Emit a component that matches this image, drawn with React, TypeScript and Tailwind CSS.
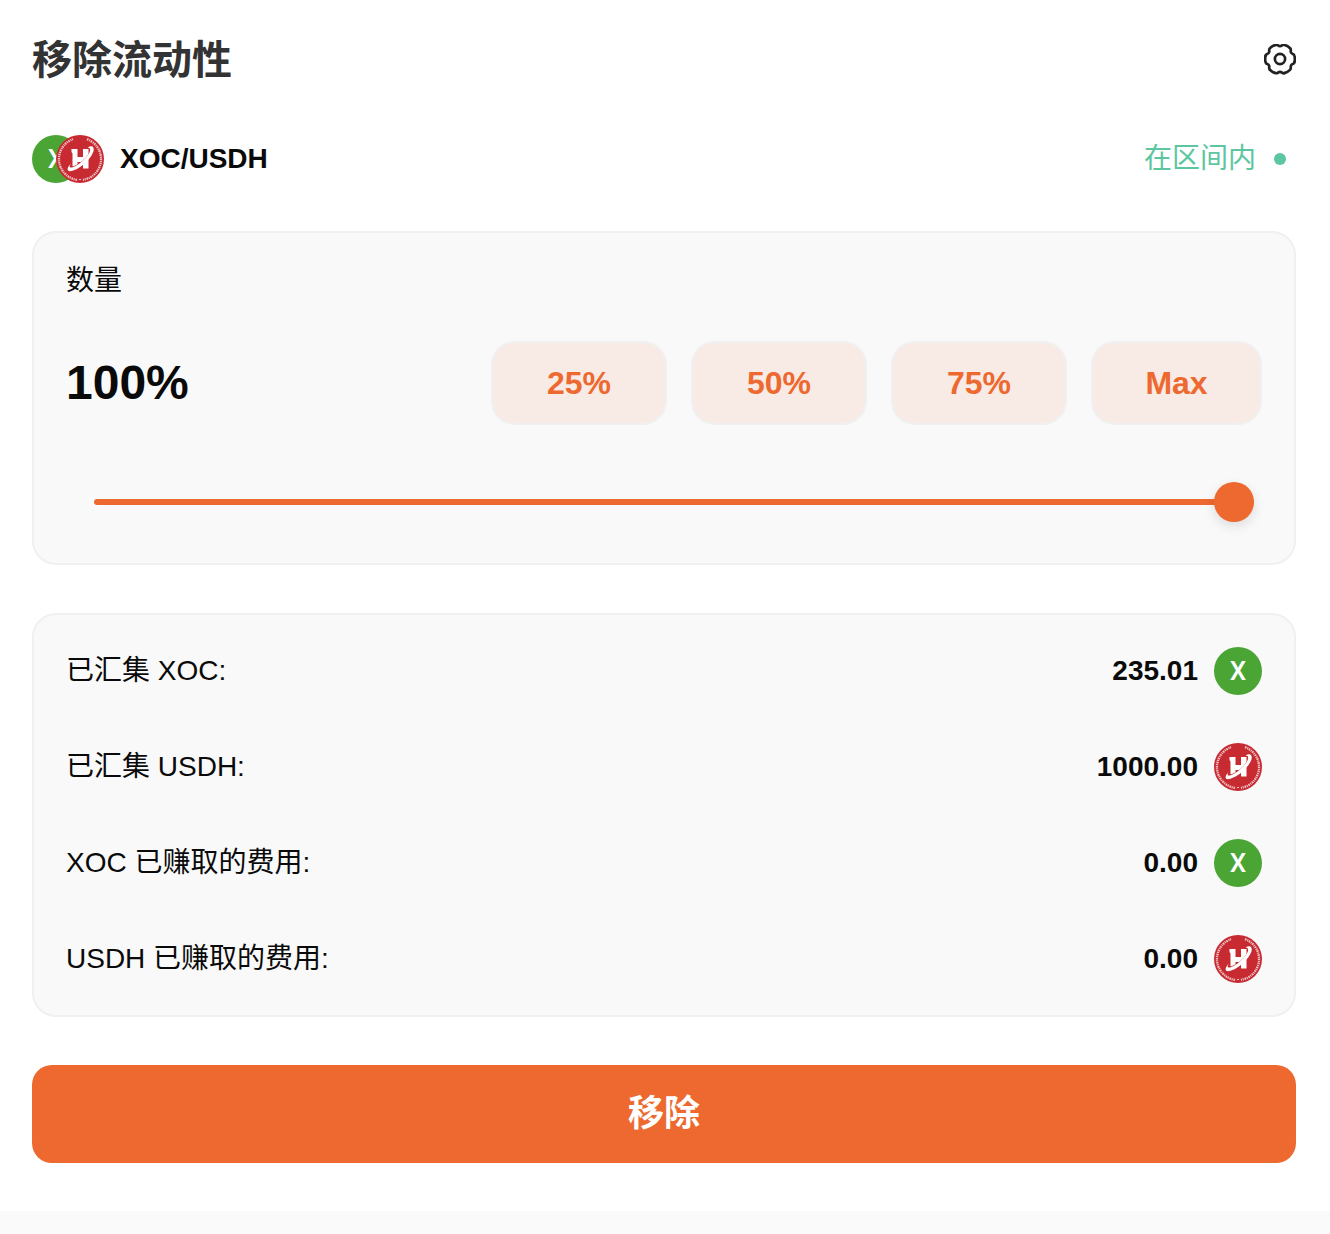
import { useState } from 'react';

const PRESETS = [
  { label: '25%', value: 25 },
  { label: '50%', value: 50 },
  { label: '75%', value: 75 },
];

const ROWS = [
  { label: '已汇集 XOC:', amount: '235.01', token: 'XOC' },
  { label: '已汇集 USDH:', amount: '1000.00', token: 'USDH' },
  { label: 'XOC 已赚取的费用:', amount: '0.00', token: 'XOC' },
  { label: 'USDH 已赚取的费用:', amount: '0.00', token: 'USDH' },
];

function SettingsIcon() {
  return (
    <svg viewBox="-16 -15 32 32" className="h-8 w-8" fill="none" stroke="currentColor" strokeWidth="2.7" strokeLinecap="round">
      {/* One notch and one tooth per sixth of the gear */}
      {[0, 60, 120, 180, 240, 300].map((deg) => (
        <path
          key={deg}
          transform={`rotate(${deg})`}
          d="M-4.39 -14.1C-2.09 -14.9 -2.2 -12.8 0 -12.8S2.09 -14.9 4.39 -14.1A12 12 0 0 1 10.02 -10.85"
        />
      ))}
      <circle r="5.1" />
    </svg>
  );
}

function UsdhIcon() {
  return (
    <svg viewBox="0 0 48 48" className="h-12 w-12 shrink-0">
      <circle cx="24" cy="24" r="24" fill="#c72a31" />
      {/* Lettering ring, broken at the top and around the bottom dash */}
      <path
        d="M31 4.2A21 21 0 0 1 27 44.8M21 44.8A21 21 0 0 1 17 4.2"
        fill="none"
        stroke="#f0c4c6"
        strokeWidth="2.3"
        strokeDasharray="1.6 .8 1.1 .7"
      />
      <path d="M23 44.5h2" stroke="#f0c4c6" strokeWidth="1" />
      <path d="M15.5 14H21.5V22H27V14H32.5V33.5H27V27H21.5V33.5H16.5V18.5L15.5 17Z" fill="#fff" />
      {/* Swoosh crossing the H */}
      <path d="M14 32.5C19.5 32 26 28 30.5 23C33 20 35 16.5 34.5 13.5" fill="none" stroke="#c72a31" strokeWidth="1.6" />
      <path
        d="M15 28.5C10 33.5 10.5 37.5 16.5 35.7C27 32.7 40 18.5 37.4 12.7C36.5 10.8 34 11 31.5 12.5C35.8 12.3 34.8 17.5 29.5 23C24 29 17 33.3 14.5 32.5C13 32 13.5 30.5 15 28.5Z"
        fill="#fff"
      />
    </svg>
  );
}

function XocIcon() {
  return (
    <span className="flex h-12 w-12 shrink-0 items-center justify-center rounded-full bg-[#4aa535] font-['Roboto',sans-serif] text-[26px] font-medium text-white">
      X
    </span>
  );
}

export default function App() {
  const [percent, setPercent] = useState(100);

  return (
    <div className="min-h-screen bg-[#fafafa] font-['Liberation_Sans','Noto_Sans_CJK_SC',sans-serif] text-[28px] leading-8 text-[#0a0a0a]">
      <main className="bg-white pt-8 pr-[34px] pb-12 pl-8">
        <header className="flex h-14 items-center justify-between">
          <h1 className="text-[40px] leading-[56px] font-bold text-[#333]">移除流动性</h1>
          <button type="button" aria-label="设置" className="text-[#222]">
            <SettingsIcon />
          </button>
        </header>

        <div className="mt-[47px] flex items-center justify-between">
          <div className="flex items-center">
            <XocIcon />
            <div className="-ml-6">
              <UsdhIcon />
            </div>
            <span className="ml-4 font-bold">XOC/USDH</span>
          </div>
          <div className="flex items-center gap-[18px] pr-2.5 text-[#5cc6a1]">
            <span>在区间内</span>
            <span className="h-3 w-3 rounded-full bg-[#5cc6a1]" />
          </div>
        </div>

        <section className="mt-12 rounded-3xl border-2 border-[#f0f0f0] bg-[#f9f9f9] px-8 pt-8 pb-10">
          <label htmlFor="amount" className="block">数量</label>
          <div className="mt-11 flex items-center justify-between">
            <span className="text-5xl font-bold">{percent}%</span>
            <div className="flex gap-6 text-[32px] font-bold text-[#ed692f]">
              {PRESETS.map((p) => (
                <button
                  key={p.value}
                  type="button"
                  onClick={() => setPercent(p.value)}
                  className="h-[84px] w-44 rounded-3xl border-2 border-[#f0f0f0] bg-[#f8ebe6]"
                >
                  {p.label}
                </button>
              ))}
              <button
                type="button"
                onClick={() => setPercent(100)}
                className="h-[84px] w-[171px] rounded-3xl border-2 border-[#f0f0f0] bg-[#f8ebe6]"
              >
                Max
              </button>
            </div>
          </div>
          <div className="mt-14 mr-2 ml-7 flex h-[42px] items-center">
            <input
              id="amount"
              type="range"
              min={0}
              max={100}
              value={percent}
              onChange={(e) => setPercent(Number(e.target.value))}
              style={{ backgroundImage: `linear-gradient(to right, #ed692f ${percent}%, #f8ebe6 ${percent}%)` }}
              className="h-1.5 w-full cursor-pointer appearance-none rounded-full [&::-webkit-slider-thumb]:h-10 [&::-webkit-slider-thumb]:w-10 [&::-webkit-slider-thumb]:appearance-none [&::-webkit-slider-thumb]:rounded-full [&::-webkit-slider-thumb]:bg-[#ed692f] [&::-webkit-slider-thumb]:shadow-[0_4px_12px_rgba(0,0,0,0.12)]"
            />
          </div>
        </section>

        <section className="mt-12 flex flex-col gap-12 rounded-3xl border-2 border-[#f0f0f0] bg-[#f9f9f9] px-8 py-8">
          {ROWS.map((row) => (
            <div key={row.label} className="flex h-12 items-center justify-between">
              <span>{row.label}</span>
              <div className="flex items-center gap-4">
                <span className="font-bold">{row.amount}</span>
                {row.token === 'XOC' ? <XocIcon /> : <UsdhIcon />}
              </div>
            </div>
          ))}
        </section>

        <button type="button" className="mt-12 h-[98px] w-full rounded-[20px] bg-[#ed692f] text-4xl font-bold text-white">
          移除
        </button>
      </main>
    </div>
  );
}
